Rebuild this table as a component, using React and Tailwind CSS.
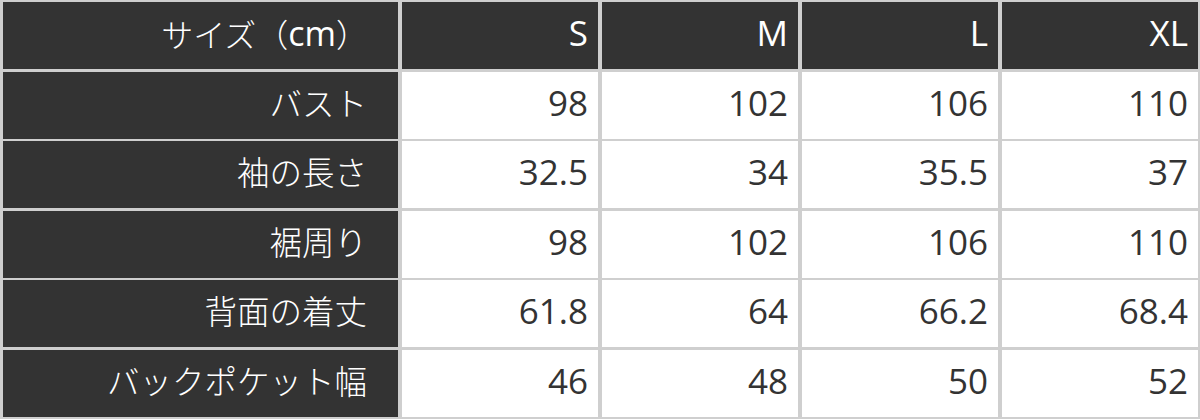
export default function App() {
  const cols = ["S", "M", "L", "XL"];
  const rows = [
    ["バスト", "98", "102", "106", "110"],
    ["袖の長さ", "32.5", "34", "35.5", "37"],
    ["裾周り", "98", "102", "106", "110"],
    ["背面の着丈", "61.8", "64", "66.2", "68.4"],
    ["バックポケット幅", "46", "48", "50", "52"],
  ];
  return (
    <div className="w-[1200px] h-[420px] bg-white">
      <div className="grid grid-cols-[395px_196px_196px_196px_196px] auto-rows-[67px] gap-x-[4px] gap-y-[2.5px] bg-[#cfcfcf] pt-[2px] pb-[2px] pl-[3px] pr-[2px] leading-none">
        <div className="bg-[#333333] text-white flex items-center justify-end pr-[30px] pb-[6px] text-[32px] font-light font-['Noto_Sans_CJK_JP','Noto_Sans',sans-serif]">
          サイズ（<span className="text-[34px] font-normal font-['Open_Sans','Noto_Sans',sans-serif]">cm</span>）
        </div>
        {cols.map((c) => (
          <div key={c} className="bg-[#333333] text-white flex items-center justify-end pr-[10px] pb-[6px] text-[35px] font-['Open_Sans','Noto_Sans',sans-serif]">{c}</div>
        ))}
        {rows.map((r) => (
          <>
            <div key={r[0]} className="bg-[#333333] text-white flex items-center justify-end pr-[31px] pb-[6px] text-[32.5px] font-light font-['Noto_Sans_CJK_JP','Noto_Sans',sans-serif]">{r[0]}</div>
            {r.slice(1).map((v, i) => (
              <div key={r[0] + i} className="bg-white text-[#333333] flex items-center justify-end pr-[10px] pb-[6px] text-[35px] font-['Open_Sans','Noto_Sans',sans-serif]">{v}</div>
            ))}
          </>
        ))}
      </div>
    </div>
  );
}
